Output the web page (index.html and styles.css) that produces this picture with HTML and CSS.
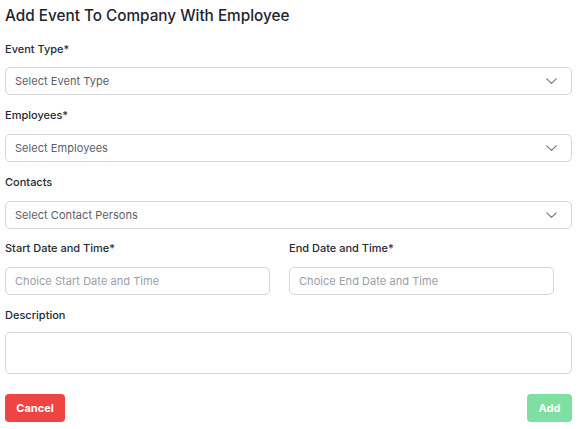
FILE: index.html
```html
<!DOCTYPE html>
<html>
<head>
<meta charset="utf-8">
<link rel="stylesheet" href="styles.css">
</head>
<body>
<div class="form">
  <h1 class="title">Add Event To Company With Employee</h1>

  <div class="field first">
    <label class="label">Event Type*</label>
    <div class="select"><span class="ph">Select Event Type</span>
      <svg class="chev" width="11" height="6" viewBox="0 0 11 6"><path d="M0.8 0.8l4.7 4.5 4.7-4.5" fill="none" stroke="#6b7280" stroke-width="1.1" stroke-linecap="round" stroke-linejoin="round"/></svg>
    </div>
  </div>

  <div class="field">
    <label class="label">Employees*</label>
    <div class="select"><span class="ph">Select Employees</span>
      <svg class="chev" width="11" height="6" viewBox="0 0 11 6"><path d="M0.8 0.8l4.7 4.5 4.7-4.5" fill="none" stroke="#6b7280" stroke-width="1.1" stroke-linecap="round" stroke-linejoin="round"/></svg>
    </div>
  </div>

  <div class="field">
    <label class="label">Contacts</label>
    <div class="select"><span class="ph">Select Contact Persons</span>
      <svg class="chev" width="11" height="6" viewBox="0 0 11 6"><path d="M0.8 0.8l4.7 4.5 4.7-4.5" fill="none" stroke="#6b7280" stroke-width="1.1" stroke-linecap="round" stroke-linejoin="round"/></svg>
    </div>
  </div>

  <div class="row">
    <div class="field">
      <label class="label">Start Date and Time*</label>
      <div class="input"><span class="ph light">Choice Start Date and Time</span></div>
    </div>
    <div class="field">
      <label class="label">End Date and Time*</label>
      <div class="input"><span class="ph light">Choice End Date and Time</span></div>
    </div>
  </div>

  <div class="field desc">
    <label class="label">Description</label>
    <div class="textarea"></div>
  </div>

  <div class="actions">
    <button class="btn cancel">Cancel</button>
    <button class="btn add">Add</button>
  </div>
</div>
</body>
</html>
```

FILE: styles.css
```css
* { box-sizing: border-box; }
body {
  margin: 0;
  font-family: Inter, "Noto Sans", sans-serif;
  color: #1f2430;
  background: #fff;
}
.form {
  width: 567px;
  margin-left: 5px;
  padding-top: 5px;
}
.title {
  margin: 0;
  font-size: 15.3px;
  font-weight: 500;
  line-height: 22px;
}
.field {
  margin-top: 12px;
  display: flex;
  flex-direction: column;
}
.label {
  font-size: 11px;
  font-weight: 500;
  line-height: 16px;
  margin-bottom: 11px;
  color: #262a33;
}
.field.first { margin-top: 14px; }
.field.first .label { margin-bottom: 10px; }
.select, .input {
  height: 28px;
  border: 1px solid #d4d6dc;
  border-radius: 5px;
  display: flex;
  align-items: center;
  justify-content: space-between;
  padding: 0 14px 0 9px;
}
.ph {
  font-size: 11px;
  color: #5b606b;
  letter-spacing: 0.05px;
}
.ph.light { color: #9a9ea7; }
.chev { display: block; }
.row {
  display: grid;
  grid-template-columns: 284px 284px;
}
.row .input { width: 265px; }
.row .field { margin-top: 11px; }
.textarea {
  height: 42px;
  border: 1px solid #d4d6dc;
  border-radius: 5px;
}
.field.desc { margin-top: 12px; }
.field.desc .label { margin-bottom: 9px; }
.actions {
  display: flex;
  justify-content: space-between;
  margin-top: 20px;
}
.btn {
  height: 28px;
  border: none;
  border-radius: 4px;
  color: #fff;
  font-family: Inter, sans-serif;
  font-weight: 700;
  font-size: 11px;
  padding: 0;
}
.cancel { width: 60px; background: #ef4444; }
.add { width: 45px; background: #7ddfa2; }
```
